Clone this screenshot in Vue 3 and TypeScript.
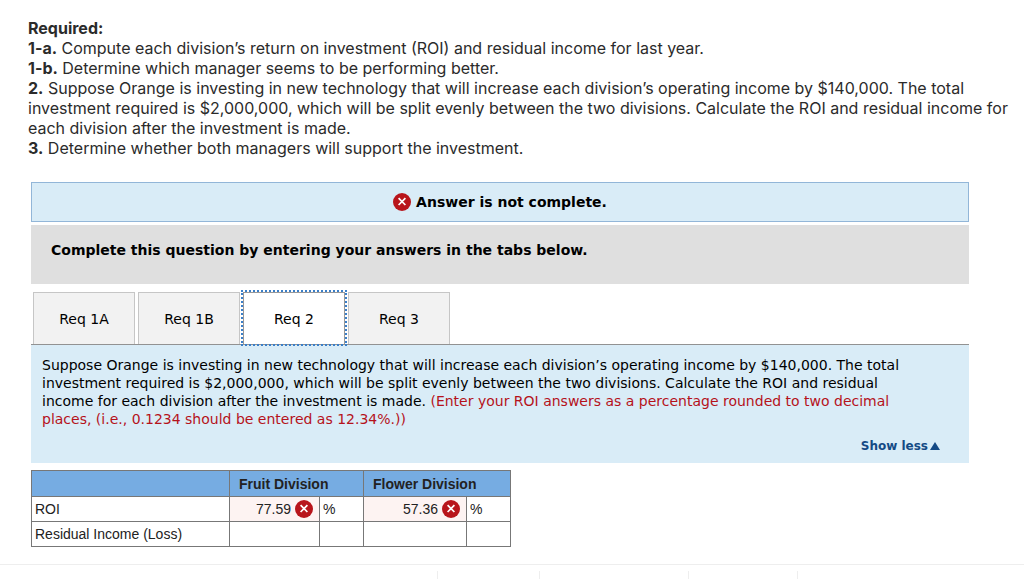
<script setup lang="ts">
import { ref } from 'vue'

interface Requirement {
  label: string
  lines: string[]
}

interface Answer {
  id: string
  value: string
  unit: string
  wrong: boolean
}

interface Row {
  label: string
  answers: Answer[]
}

const requirements: Requirement[] = [
  { label: '1-a.', lines: ['Compute each division’s return on investment (ROI) and residual income for last year.'] },
  { label: '1-b.', lines: ['Determine which manager seems to be performing better.'] },
  {
    label: '2.',
    lines: [
      'Suppose Orange is investing in new technology that will increase each division’s operating income by $140,000. The total',
      'investment required is $2,000,000, which will be split evenly between the two divisions. Calculate the ROI and residual income for',
      'each division after the investment is made.',
    ],
  },
  { label: '3.', lines: ['Determine whether both managers will support the investment.'] },
]

const tabs = ['Req 1A', 'Req 1B', 'Req 2', 'Req 3']
const active = ref('Req 2')

const divisions = ['Fruit Division', 'Flower Division']
const rows = ref<Row[]>([
  {
    label: 'ROI',
    answers: [
      { id: 'roi-fruit', value: '77.59', unit: '%', wrong: true },
      { id: 'roi-flower', value: '57.36', unit: '%', wrong: true },
    ],
  },
  {
    label: 'Residual Income (Loss)',
    answers: [
      { id: 'income-fruit', value: '', unit: '', wrong: false },
      { id: 'income-flower', value: '', unit: '', wrong: false },
    ],
  },
])
</script>

<template>
  <main class="page">
    <section class="required">
      <p><b>Required:</b></p>
      <p v-for="item in requirements" :key="item.label">
        <b>{{ item.label }}</b>{{ ' ' }}<template v-for="(line, i) in item.lines" :key="i"><br v-if="i > 0">{{ line }}</template>
      </p>
    </section>

    <section class="work">
      <div class="status" role="status">
        <svg class="mark" viewBox="0 0 18 18" aria-hidden="true">
          <circle cx="9" cy="9" r="9" />
          <path d="M5.6 5.2 12.4 12M12.4 5.2 5.6 12" />
        </svg>
        <span>Answer is not complete.</span>
      </div>

      <div class="instruction">Complete this question by entering your answers in the tabs below.</div>

      <div class="tabs" role="tablist">
        <button
          v-for="tab in tabs"
          :key="tab"
          type="button"
          role="tab"
          class="tab"
          :class="{ active: tab === active }"
          :aria-selected="tab === active"
          @click="active = tab"
        >{{ tab }}</button>
      </div>

      <div class="panel" role="tabpanel">
        <p class="question">
          Suppose Orange is investing in new technology that will increase each division’s operating income by $140,000. The total<br>
          investment required is $2,000,000, which will be split evenly between the two divisions. Calculate the ROI and residual<br>
          income for each division after the investment is made. <span class="hint">(Enter your ROI answers as a percentage rounded to two decimal<br>
          places, (i.e., 0.1234 should be entered as 12.34%.))</span>
        </p>
        <a class="toggle" href="#">Show less<svg viewBox="0 0 10 8" aria-hidden="true"><path d="M5 0 10 8H0z" /></svg></a>
      </div>

      <table class="answers">
        <colgroup>
          <col class="c-label"><col class="c-value"><col class="c-unit"><col class="c-wide"><col class="c-unit">
        </colgroup>
        <thead>
          <tr>
            <th></th>
            <th v-for="name in divisions" :key="name" colspan="2" scope="col">{{ name }}</th>
          </tr>
        </thead>
        <tbody>
          <tr v-for="row in rows" :key="row.label">
            <th scope="row">{{ row.label }}</th>
            <template v-for="(answer, i) in row.answers" :key="answer.id">
              <td :class="{ wrong: answer.wrong }">
                <div class="entry">
                  <input :id="answer.id" v-model="answer.value" type="text" :aria-label="row.label + ', ' + divisions[i]">
                  <svg v-if="answer.wrong" class="mark" viewBox="0 0 18 18" aria-hidden="true">
                    <circle cx="9" cy="9" r="9" />
                    <path d="M5.6 5.2 12.4 12M12.4 5.2 5.6 12" />
                  </svg>
                </div>
              </td>
              <td class="unit">{{ answer.unit }}</td>
            </template>
          </tr>
        </tbody>
      </table>
    </section>

    <footer class="pager">
      <span class="cell first"></span>
      <span class="cell previous"></span>
      <span class="cell count"></span>
      <span class="cell next"></span>
      <span class="cell rest"></span>
    </footer>
  </main>
</template>

<style>
body {
  margin: 0;
  background: #fff;
  overflow: hidden;
}
</style>

<style scoped>
.page {
  padding-top: 18px;
  font-family: "DejaVu Sans", Verdana, sans-serif;
  color: #000;
}

.required {
  padding-left: 28px;
  font: 16px/20px Inter, sans-serif;
  color: #2b2b2b;
  white-space: nowrap;
}

.required p {
  margin: 0;
}

.work {
  margin: 24px 55px 0 31px;
}

.mark {
  flex: none;
  width: 18px;
  height: 18px;
}

.mark circle {
  fill: #b8151b;
}

.mark path {
  fill: none;
  stroke: #fff;
  stroke-width: 1.7;
}

.status {
  display: flex;
  align-items: center;
  justify-content: center;
  gap: 5px;
  height: 38px;
  border: 1px solid #92b6d8;
  background: #d9ecf7;
  font-size: 14px;
  font-weight: bold;
}

.instruction {
  margin-top: 3px;
  padding: 16px 20px 25px;
  background: #dfdfdf;
  font-size: 14px;
  line-height: 18px;
  font-weight: bold;
}

.tabs {
  display: flex;
  gap: 3px;
  margin-top: 8px;
  padding-left: 2px;
}

.tab {
  width: 102px;
  height: 52px;
  padding: 0;
  border: solid #c6c6c6;
  border-width: 1px 1px 0;
  background: #f2f2f2;
  color: #000;
  font: 14px "DejaVu Sans", Verdana, sans-serif;
}

.tab.active {
  position: relative;
  border-color: #999;
  background: #fff;
  outline: 2px dotted #3b7fc8;
}

.panel {
  padding: 11px 11px 8px;
  border-top: 1px solid #929292;
  background: #d9ecf7;
  font-size: 14px;
  line-height: 18px;
}

.question {
  margin: 0;
  white-space: nowrap;
}

.hint {
  color: #b5121b;
}

.toggle {
  display: flex;
  align-items: center;
  justify-content: flex-end;
  gap: 2px;
  margin: 9px 18px 0 0;
  color: #144a85;
  font-size: 12px;
  font-weight: bold;
  text-decoration: none;
}

.toggle svg {
  width: 10px;
  height: 8px;
  fill: currentColor;
}

.answers {
  table-layout: fixed;
  width: 480px;
  margin-top: 7px;
  border-collapse: collapse;
  font: 14px/18px "Liberation Sans", Arial, sans-serif;
  color: #222;
}

.c-label { width: 198px; }
.c-value { width: 90px; }
.c-unit { width: 44px; }
.c-wide { width: 103px; }

.answers th,
.answers td {
  height: 25px;
  padding: 0 3px;
  border: 1px solid #777;
  box-sizing: border-box;
  text-align: left;
}

.answers thead th {
  height: 26px;
  padding-left: 9px;
  background: #76ace2;
}

.answers tbody th {
  font-weight: normal;
}

.answers .wrong {
  padding-right: 6px;
  background: #fdf3f2;
}

.entry {
  display: flex;
  align-items: center;
  gap: 4px;
}

.entry input {
  flex: 1;
  min-width: 0;
  height: 20px;
  padding: 0;
  border: 0;
  background: transparent;
  color: inherit;
  font: inherit;
  text-align: right;
}

.pager {
  display: flex;
  margin-top: 17px;
  padding-top: 6px;
  border-top: 1px solid #eee;
}

.cell {
  box-sizing: border-box;
  height: 8px;
  border-right: 1px solid #eee;
}

.first { flex: 439; }
.previous { flex: 101; }
.count { flex: 149; }
.next { flex: 108; }
.rest { flex: 227; border: 0; }
</style>
